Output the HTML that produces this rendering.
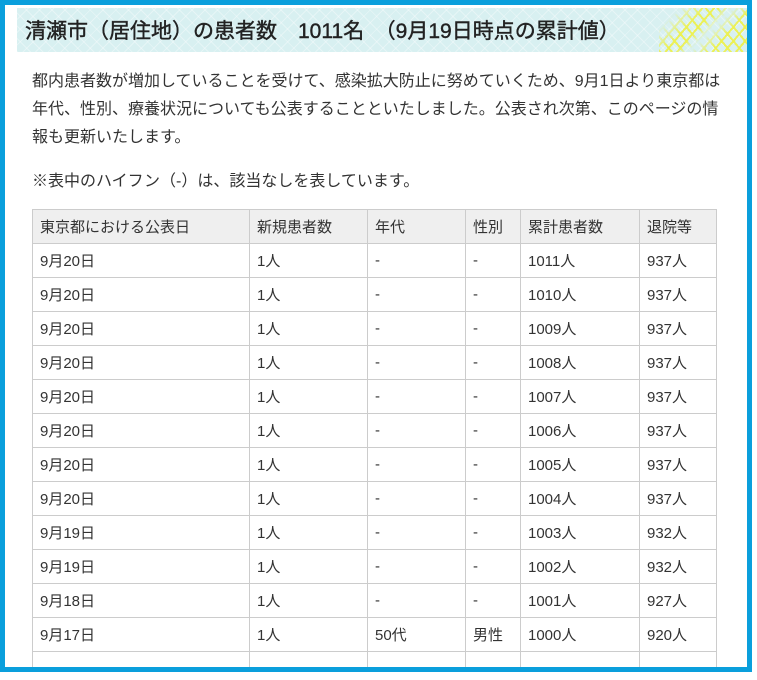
<!DOCTYPE html>
<html><head><meta charset="utf-8"><style>
*{margin:0;padding:0;box-sizing:border-box}
body{width:757px;height:680px;background:#fff;font-family:"Liberation Sans","Noto Sans CJK JP",sans-serif;color:#333;position:relative;overflow:hidden}
.frame{position:absolute;left:0;top:0;width:752px;height:672px;border:5px solid #0a9fdc;overflow:hidden;background:#fff}
.hd{position:absolute;left:12px;top:3px;width:732px;height:44px;background-color:#d8f0f1;
background-image:repeating-linear-gradient(45deg,rgba(255,255,255,.35) 0 1px,transparent 1px 9px),repeating-linear-gradient(-45deg,rgba(255,255,255,.35) 0 1px,transparent 1px 9px);}
.hd h1{position:absolute;left:8px;top:7px;font-size:21px;font-weight:normal;color:#222;white-space:nowrap;-webkit-text-stroke:.4px #222}
.deco{position:absolute;right:0;top:0;width:90px;height:44px;background-image:repeating-linear-gradient(50deg,rgba(236,240,80,.95) 0 2px,transparent 2px 9px),repeating-linear-gradient(-50deg,rgba(236,240,80,.95) 0 2px,transparent 2px 9px);
-webkit-mask-image:linear-gradient(135deg,transparent 15%,#000 35%,#000 45%,transparent 55%,#000 70%);}
.p{position:absolute;left:27px;font-size:16px;line-height:28px;color:#333;white-space:nowrap}
table{position:absolute;left:27px;top:204px;border-collapse:collapse;font-size:15px;table-layout:fixed}
td,th{border:1px solid #ccc;height:34px;padding:0 7px;text-align:left;font-weight:normal;white-space:nowrap}
th{background:#efefef}
</style></head><body>
<div class="frame">
<div class="hd"><div class="deco"></div><h1>清瀬市（居住地）の患者数　1011名　（9月19日時点の累計値）</h1></div>
<div class="p" style="top:63px">都内患者数が増加していることを受けて、感染拡大防止に努めていくため、9月1日より東京都は<br>年代、性別、療養状況についても公表することといたしました。公表され次第、このページの情<br>報も更新いたします。</div>
<div class="p" style="top:163px">※表中のハイフン（-）は、該当なしを表しています。</div>
<table>
<colgroup><col style="width:217px"><col style="width:118px"><col style="width:98px"><col style="width:55px"><col style="width:119px"><col style="width:77px"></colgroup>
<tr><th>東京都における公表日</th><th>新規患者数</th><th>年代</th><th>性別</th><th>累計患者数</th><th>退院等</th></tr>
<tr><td>9月20日</td><td>1人</td><td>-</td><td>-</td><td>1011人</td><td>937人</td></tr>
<tr><td>9月20日</td><td>1人</td><td>-</td><td>-</td><td>1010人</td><td>937人</td></tr>
<tr><td>9月20日</td><td>1人</td><td>-</td><td>-</td><td>1009人</td><td>937人</td></tr>
<tr><td>9月20日</td><td>1人</td><td>-</td><td>-</td><td>1008人</td><td>937人</td></tr>
<tr><td>9月20日</td><td>1人</td><td>-</td><td>-</td><td>1007人</td><td>937人</td></tr>
<tr><td>9月20日</td><td>1人</td><td>-</td><td>-</td><td>1006人</td><td>937人</td></tr>
<tr><td>9月20日</td><td>1人</td><td>-</td><td>-</td><td>1005人</td><td>937人</td></tr>
<tr><td>9月20日</td><td>1人</td><td>-</td><td>-</td><td>1004人</td><td>937人</td></tr>
<tr><td>9月19日</td><td>1人</td><td>-</td><td>-</td><td>1003人</td><td>932人</td></tr>
<tr><td>9月19日</td><td>1人</td><td>-</td><td>-</td><td>1002人</td><td>932人</td></tr>
<tr><td>9月18日</td><td>1人</td><td>-</td><td>-</td><td>1001人</td><td>927人</td></tr>
<tr><td>9月17日</td><td>1人</td><td>50代</td><td>男性</td><td>1000人</td><td>920人</td></tr>
<tr><td></td><td></td><td></td><td></td><td></td><td></td></tr>
</table>
</div>
</body></html>
